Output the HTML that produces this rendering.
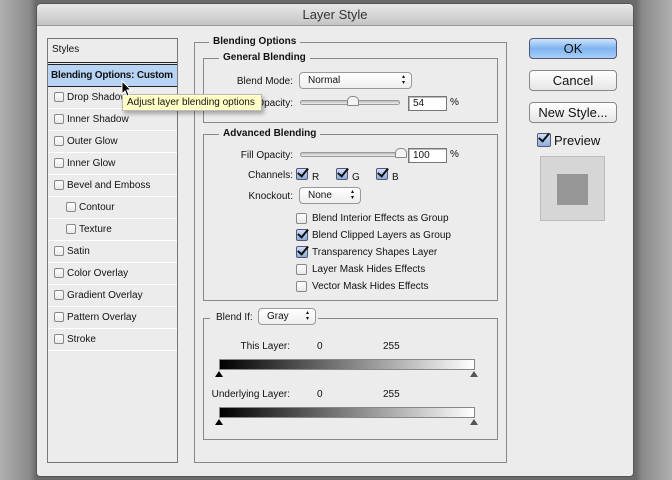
<!DOCTYPE html>
<html><head><meta charset="utf-8"><style>
*{margin:0;padding:0;box-sizing:border-box}
body{width:672px;height:480px;overflow:hidden;background:linear-gradient(90deg,#b0b0b0 0,#8a8a8a 30px,#6a6a6a 36px,#6a6a6a 636px,#8a8a8a 642px,#b0b0b0 672px);font-family:"Liberation Sans",sans-serif;font-size:10px;color:#111;position:relative;white-space:nowrap}
.a{position:absolute}
#dlg{left:36px;top:3px;width:598px;height:474px;background:#ececec;border-radius:5px 5px 4px 4px;border:1px solid #555;overflow:hidden}
#title{left:0;top:0;width:100%;height:22px;background:linear-gradient(#e8e8e8,#c4c4c4);border-bottom:1px solid #999;text-align:center;font-size:13px;line-height:22px;color:#333}
.box{border:1px solid #888}
.lg{position:absolute;background:#ececec;padding:0 4px;font-weight:bold;font-size:10px;top:-7px}
.row{position:absolute;left:0;width:129px;height:22px;border-bottom:1px solid #fff;line-height:21px;padding-left:19px}
.cb{position:absolute;width:10px;height:10px;border:1px solid #888;border-radius:2px;background:linear-gradient(#fff,#e8e8e8)}
.ck{position:absolute;width:12px;height:12px;border:1px solid #557;border-radius:2px;background:linear-gradient(#cfe0f5,#8aaedb)}
.ck:after{content:"";position:absolute;left:3px;top:-3px;width:4px;height:9px;border-right:2.5px solid #111;border-bottom:2.5px solid #111;transform:rotate(40deg)}
.lbl{position:absolute;text-align:right}
.sel{position:absolute;border:1px solid #999;border-radius:4px;background:linear-gradient(#fff,#eee);height:17px;line-height:15px;padding-left:8px}
.sel:after{content:"\25B4\A\25BE";white-space:pre;position:absolute;right:6px;top:1px;font-size:6px;line-height:6px}
.slider{position:absolute;height:5px;border:1px solid #999;border-radius:3px;background:linear-gradient(#bbb,#eee)}
.inp{position:absolute;height:15px;background:#fff;border:1px solid #777;box-shadow:inset 1px 1px 0 #bbb;padding-left:4px;line-height:13px}
.btn{position:absolute;left:493px;width:88px;height:21px;border:1px solid #888;border-radius:4px;background:linear-gradient(#fff,#e6e6e6);text-align:center;font-size:13px;line-height:19px}
.grad{position:absolute;left:219px;width:256px;height:11px;border:1px solid #888;background:linear-gradient(90deg,#000,#fff)}
.tb,.tw{position:absolute;width:0;height:0;border-left:4px solid transparent;border-right:4px solid transparent;border-bottom:6px solid #000}
.tw{border-bottom-color:#555}
</style></head><body>
<div id="dlg" class="a">
<div id="title" class="a">Layer Style</div>
</div>
<!-- styles panel -->
<div class="a" style="left:47px;top:38px;width:131px;height:425px;border:1px solid #777;background:#ececec">
 <div class="a" style="left:0;top:0;width:129px;height:23px;padding-left:4px;line-height:22px">Styles</div>
 <div class="a" style="left:0;top:23px;width:129px;height:3px;border-top:1px solid #222;border-bottom:1px solid #222"></div>
 <div class="a" style="left:0;top:26px;width:129px;height:22px;background:#b7d4f5;border-bottom:1px solid #222;font-weight:bold;line-height:21px;padding-left:3px;letter-spacing:-0.2px">Blending Options: Custom</div>
 <div class="row" style="top:48px"><span class="cb" style="left:6px;top:5px"></span>Drop Shadow</div>
 <div class="row" style="top:70px"><span class="cb" style="left:6px;top:5px"></span>Inner Shadow</div>
 <div class="row" style="top:92px"><span class="cb" style="left:6px;top:5px"></span>Outer Glow</div>
 <div class="row" style="top:114px"><span class="cb" style="left:6px;top:5px"></span>Inner Glow</div>
 <div class="row" style="top:136px"><span class="cb" style="left:6px;top:5px"></span>Bevel and Emboss</div>
 <div class="row" style="top:158px;padding-left:31px"><span class="cb" style="left:18px;top:5px"></span>Contour</div>
 <div class="row" style="top:180px;padding-left:31px"><span class="cb" style="left:18px;top:5px"></span>Texture</div>
 <div class="row" style="top:202px"><span class="cb" style="left:6px;top:5px"></span>Satin</div>
 <div class="row" style="top:224px"><span class="cb" style="left:6px;top:5px"></span>Color Overlay</div>
 <div class="row" style="top:246px"><span class="cb" style="left:6px;top:5px"></span>Gradient Overlay</div>
 <div class="row" style="top:268px"><span class="cb" style="left:6px;top:5px"></span>Pattern Overlay</div>
 <div class="row" style="top:290px"><span class="cb" style="left:6px;top:5px"></span>Stroke</div>
</div>
<!-- blending options -->
<div class="a box" style="left:194px;top:42px;width:313px;height:421px"><span class="lg" style="left:14px">Blending Options</span></div>
<div class="a box" style="left:203px;top:58px;width:295px;height:65px"><span class="lg" style="left:15px">General Blending</span></div>
<div class="lbl" style="left:220px;top:76px;width:73px">Blend Mode:</div>
<div class="sel" style="left:299px;top:72px;width:113px">Normal</div>
<div class="lbl" style="left:220px;top:98px;width:73px">Opacity:</div>
<div class="slider" style="left:300px;top:100px;width:100px"></div>
<div class="a" style="left:347px;top:96px;width:12px;height:10px;background:#f4f4f4;border:1px solid #888;border-radius:5px 5px 1px 1px"></div>
<div class="inp" style="left:408px;top:96px;width:39px">54</div>
<div class="a" style="left:450px;top:97px">%</div>

<div class="a box" style="left:203px;top:134px;width:295px;height:167px"><span class="lg" style="left:15px">Advanced Blending</span></div>
<div class="lbl" style="left:220px;top:150px;width:73px">Fill Opacity:</div>
<div class="slider" style="left:300px;top:152px;width:100px"></div>
<div class="a" style="left:395px;top:148px;width:12px;height:10px;background:#f4f4f4;border:1px solid #888;border-radius:5px 5px 1px 1px"></div>
<div class="inp" style="left:408px;top:148px;width:39px">100</div>
<div class="a" style="left:450px;top:149px">%</div>
<div class="lbl" style="left:220px;top:170px;width:73px">Channels:</div>
<span class="ck" style="left:296px;top:168px"></span><div class="a" style="left:312px;top:172px">R</div>
<span class="ck" style="left:336px;top:168px"></span><div class="a" style="left:352px;top:172px">G</div>
<span class="ck" style="left:376px;top:168px"></span><div class="a" style="left:392px;top:172px">B</div>
<div class="lbl" style="left:220px;top:191px;width:73px">Knockout:</div>
<div class="sel" style="left:299px;top:187px;width:62px">None</div>
<span class="cb" style="left:296px;top:213px;width:11px;height:11px"></span><div class="a" style="left:312px;top:213px">Blend Interior Effects as Group</div>
<span class="ck" style="left:296px;top:229px"></span><div class="a" style="left:312px;top:230px">Blend Clipped Layers as Group</div>
<span class="ck" style="left:296px;top:246px"></span><div class="a" style="left:312px;top:247px">Transparency Shapes Layer</div>
<span class="cb" style="left:296px;top:264px;width:11px;height:11px"></span><div class="a" style="left:312px;top:264px">Layer Mask Hides Effects</div>
<span class="cb" style="left:296px;top:281px;width:11px;height:11px"></span><div class="a" style="left:312px;top:281px">Vector Mask Hides Effects</div>

<div class="a box" style="left:203px;top:318px;width:295px;height:122px"></div>
<div class="a" style="left:210px;top:308px;width:108px;height:20px;background:#ececec"></div>
<div class="a" style="left:216px;top:312px">Blend If:</div>
<div class="sel" style="left:258px;top:308px;width:58px">Gray</div>
<div class="lbl" style="left:200px;top:341px;width:90px">This Layer:</div>
<div class="a" style="left:317px;top:341px">0</div><div class="a" style="left:383px;top:341px">255</div>
<div class="grad" style="top:359px"></div>
<div class="tb" style="left:215px;top:371px"></div><div class="tw" style="left:470px;top:371px"></div>
<div class="lbl" style="left:200px;top:389px;width:90px">Underlying Layer:</div>
<div class="a" style="left:317px;top:389px">0</div><div class="a" style="left:383px;top:389px">255</div>
<div class="grad" style="top:407px"></div>
<div class="tb" style="left:215px;top:419px"></div><div class="tw" style="left:470px;top:419px"></div>

<!-- buttons -->
<div class="btn" style="top:38px;left:529px;background:linear-gradient(#cfe3fb,#7fb4f0 50%,#a8cff7);border-color:#557">OK</div>
<div class="btn" style="top:70px;left:529px">Cancel</div>
<div class="btn" style="top:102px;left:529px">New Style...</div>
<span class="ck" style="left:537px;top:133px;width:14px;height:14px"></span>
<div class="a" style="left:554px;top:133px;font-size:13px">Preview</div>
<div class="a" style="left:540px;top:156px;width:65px;height:65px;background:#d6d6d6;border:1px solid #bbb"></div>
<div class="a" style="left:557px;top:174px;width:31px;height:31px;background:#969696"></div>

<!-- tooltip -->
<div class="a" style="left:122px;top:94px;width:140px;height:17px;background:#ffffc6;border:1px solid #bbb;box-shadow:2px 3px 4px rgba(0,0,0,.3);padding-left:4px;line-height:15px;font-size:10px">Adjust layer blending options</div>
<svg class="a" style="left:121px;top:80px" width="12" height="18" viewBox="0 0 12 18"><path d="M1 1 L1 14 L4 11 L6 16 L8 15 L6 10 L10 10 Z" fill="#000" stroke="#fff" stroke-width="1"/></svg>
</body></html>
